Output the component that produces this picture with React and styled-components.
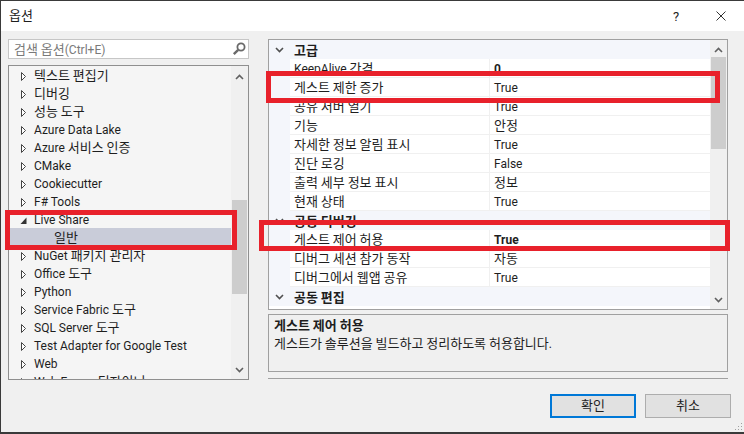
import React from 'react';
import styled, {createGlobalStyle} from 'styled-components';

const GlobalStyle = createGlobalStyle`
    html, body {
        margin: 0;
        padding: 0;
        background: #f0f0f0;
    }
`;

const FONT = `Roboto, "Noto Sans", "Noto Sans CJK KR", sans-serif`;

const Dialog = styled.div`
    position: relative;
    width: 744px;
    height: 434px;
    box-sizing: border-box;
    display: flex;
    flex-direction: column;
    overflow: hidden;
    background: #f0f0f0;
    border-top: 1px solid #3a3a3a;
    border-left: 1px solid #3a3a3a;
    border-bottom: 2px solid #3a3a3a;
    font-family: ${FONT};
    font-size: 12px;
    color: #1e1e1e;
`;

// Hangul runs sit a size above the latin text, as they do in the dialog font.
// The small line-height keeps them on the latin baseline
const Hangul = styled.span`
    font-family: "Noto Sans CJK KR", sans-serif;
    font-size: 13px;
    line-height: 11px;
`;

const TitleBar = styled.div`
    height: 30px;
    flex: none;
    display: flex;
    align-items: center;
    background: #fff;
    padding-left: 8px;
`;

const TitleText = styled.span`
    flex: 1;
`;

const HelpMark = styled.span`
    width: 14px;
    margin-right: 33px;
    text-align: center;
    font-size: 13px;
`;

const CloseButton = styled.svg`
    width: 10px;
    height: 10px;
    margin-right: 18px;
`;

const Panes = styled.div`
    display: flex;
    padding: 8px 15px 0 7px;
    flex: none;
`;

const LeftPane = styled.div`
    width: 241px;
    flex: none;
    margin-right: 19px;
`;

const SearchBox = styled.div`
    height: 20px;
    box-sizing: border-box;
    display: flex;
    align-items: center;
    justify-content: space-between;
    padding: 2px 2px 0 5px;
    background: #fff;
    border: 1px solid #c6c6c6;
    color: #7a7a7a;
    margin-bottom: 6px;
`;

const SearchIcon = styled.svg`
    width: 14px;
    height: 14px;
    margin-bottom: 2px;
`;

const Tree = styled.div`
    height: 315px;
    box-sizing: border-box;
    display: flex;
    border: 1px solid #8f8f8f;
    background: #f5f5f5;
    overflow: hidden;
`;

const TreeRows = styled.div`
    flex: 1;
    overflow: hidden;
`;

const TreeRow = styled.div`
    height: 18px;
    box-sizing: border-box;
    display: flex;
    align-items: center;
    white-space: nowrap;
    padding-top: 2px;
    padding-left: ${p => (p.$child ? 45 : 11)}px;
    background: ${p => (p.$selected ? '#c9ccd9' : 'transparent')};
`;

const Label = styled.span`
    white-space: pre;
`;

const Expander = styled.svg`
    width: 7px;
    height: 11px;
    margin-right: 7px;
    flex: none;
`;

const Scrollbar = styled.div`
    position: relative;
    width: 17px;
    flex: none;
    background: #f0f0f0;
`;

const Thumb = styled.div`
    position: absolute;
    left: 1px;
    right: 1px;
    top: ${p => p.$top}px;
    height: ${p => p.$height}px;
    background: #cdcdcd;
`;

const Arrow = styled.svg`
    position: absolute;
    left: 4px;
    width: 9px;
    height: 6px;
    top: ${p => p.$top}px;
`;

const RightPane = styled.div`
    width: 460px;
    flex: none;
`;

const Grid = styled.div`
    height: 271px;
    box-sizing: border-box;
    display: flex;
    border: 1px solid #a0a0a0;
    background: #fff;
    overflow: hidden;
    margin-bottom: 4px;
`;

const GridRows = styled.div`
    flex: 1;
    overflow: hidden;
`;

const Category = styled.div`
    height: 19px;
    box-sizing: border-box;
    padding-top: 2px;
    display: flex;
    align-items: center;
    background: #f4f6fb;
    font-weight: 700;
`;

const CategoryChevron = styled.svg`
    width: 9px;
    height: 6px;
    margin: 0 10px 2px 6px;
    flex: none;
`;

const PropRow = styled.div`
    height: 19px;
    box-sizing: border-box;
    display: flex;
    align-items: center;
    margin-left: 21px;
    border-bottom: 1px solid #f0f0f0;
    box-shadow: -21px 0 0 #f4f6fb;
`;

const PropName = styled.div`
    width: 200px;
    height: 100%;
    box-sizing: border-box;
    padding: 2px 0 0 4px;
    display: flex;
    align-items: center;
    border-right: 1px solid #f0f0f0;
    flex: none;
`;

const PropValue = styled.div`
    padding: 2px 0 0 4px;
    font-weight: ${p => (p.$bold ? 700 : 400)};
`;

const Description = styled.div`
    height: 58px;
    box-sizing: border-box;
    border: 1px solid #a0a0a0;
    padding: 2px 5px;
    line-height: 18px;
`;

const DescriptionTitle = styled.div`
    font-weight: 700;
`;

const Separator = styled.div`
    height: 1px;
    background: #a0a0a0;
    margin-top: 6px;
`;

const Footer = styled.div`
    display: flex;
    justify-content: flex-end;
    gap: 9px;
    padding: 14px 13px 0 0;
`;

const Button = styled.button`
    width: 86px;
    height: 24px;
    box-sizing: border-box;
    padding: 0;
    font: inherit;
    color: #1e1e1e;
    background: #e1e1e1;
    border: ${p => (p.$primary ? '2px solid #0078d7' : '1px solid #adadad')};
`;

const Grip = styled.svg`
    position: absolute;
    right: 1px;
    bottom: 1px;
    width: 10px;
    height: 10px;
`;

const RedBox = styled.div`
    position: absolute;
    box-sizing: border-box;
    border: 5px solid #e8212b;
    left: ${p => p.$left}px;
    top: ${p => p.$top}px;
    width: ${p => p.$width}px;
    height: ${p => p.$height}px;
`;

const treeItems = [
    {label: '텍스트 편집기'},
    {label: '디버깅'},
    {label: '성능 도구'},
    {label: 'Azure Data Lake'},
    {label: 'Azure 서비스 인증'},
    {label: 'CMake'},
    {label: 'Cookiecutter'},
    {label: 'F# Tools'},
    {label: 'Live Share', open: true},
    {label: '일반', child: true, selected: true},
    {label: 'NuGet 패키지 관리자'},
    {label: 'Office 도구'},
    {label: 'Python'},
    {label: 'Service Fabric 도구'},
    {label: 'SQL Server 도구'},
    {label: 'Test Adapter for Google Test'},
    {label: 'Web'},
    {label: 'Web Forms 디자이너'}
];

const gridItems = [
    {category: '고급'},
    {name: 'KeepAlive 간격', value: '0', bold: true},
    {name: '게스트 제한 증가', value: 'True'},
    {name: '공유 서버 열기', value: 'True'},
    {name: '기능', value: '안정'},
    {name: '자세한 정보 알림 표시', value: 'True'},
    {name: '진단 로깅', value: 'False'},
    {name: '출력 세부 정보 표시', value: '정보'},
    {name: '현재 상태', value: 'True'},
    {category: '공동 디버깅'},
    {name: '게스트 제어 허용', value: 'True', bold: true},
    {name: '디버그 세션 참가 동작', value: '자동'},
    {name: '디버그에서 웹앱 공유', value: 'True'},
    {category: '공동 편집'}
];

const Mixed = ({text}) => (
    <Label>
        {text.split(/([가-힣]+(?: [가-힣]+)*)/).map((part, i) => (
            i % 2 ? <Hangul key={i}>{part}</Hangul> : part
        ))}
    </Label>
);

const ChevronUp = ({top}) => (
    <Arrow $top={top} viewBox="0 0 9 6">
        <path d="M1 5 L4.5 1.5 L8 5" fill="none" stroke="#606060" strokeWidth="1.6"/>
    </Arrow>
);

const ChevronDown = ({top}) => (
    <Arrow $top={top} viewBox="0 0 9 6">
        <path d="M1 1 L4.5 4.5 L8 1" fill="none" stroke="#606060" strokeWidth="1.6"/>
    </Arrow>
);

const TreeExpander = ({open}) => (
    <Expander viewBox="0 0 7 11">
        {open
            ? <path d="M6.5 2.5 V9 H0.5 Z" fill="#333"/>
            : <path d="M1.5 1.5 L5.5 5.5 L1.5 9.5 Z" fill="#fff" stroke="#444" strokeWidth="1"/>}
    </Expander>
);

export default function App() {
    return (
        <Dialog>
            <GlobalStyle/>
            <TitleBar>
                <TitleText><Mixed text="옵션"/></TitleText>
                <HelpMark>?</HelpMark>
                <CloseButton viewBox="0 0 10 10">
                    <path d="M0.5 0.5 L9.5 9.5 M9.5 0.5 L0.5 9.5" stroke="#333" strokeWidth="1"/>
                </CloseButton>
            </TitleBar>
            <Panes>
                <LeftPane>
                    <SearchBox>
                        <Mixed text="검색 옵션(Ctrl+E)"/>
                        <SearchIcon viewBox="0 0 14 14">
                            <circle cx="9" cy="5" r="3.6" fill="none" stroke="#6a6a6a" strokeWidth="1.8"/>
                            <path d="M6.2 7.8 L1.8 12.2" stroke="#6a6a6a" strokeWidth="2.4"/>
                        </SearchIcon>
                    </SearchBox>
                    <Tree>
                        <TreeRows>
                            {treeItems.map(item => (
                                <TreeRow key={item.label} $child={item.child} $selected={item.selected}>
                                    {!item.child && <TreeExpander open={item.open}/>}
                                    <Mixed text={item.label}/>
                                </TreeRow>
                            ))}
                        </TreeRows>
                        <Scrollbar>
                            <ChevronUp top={8}/>
                            <Thumb $top={134} $height={94}/>
                            <ChevronDown top={301}/>
                        </Scrollbar>
                    </Tree>
                </LeftPane>
                <RightPane>
                    <Grid>
                        <GridRows>
                            {gridItems.map(item => item.category
                                ? (
                                    <Category key={item.category}>
                                        <CategoryChevron viewBox="0 0 9 6">
                                            <path d="M1 1 L4.5 4.5 L8 1" fill="none" stroke="#505050" strokeWidth="1.6"/>
                                        </CategoryChevron>
                                        <Mixed text={item.category}/>
                                    </Category>
                                )
                                : (
                                    <PropRow key={item.name}>
                                        <PropName><Mixed text={item.name}/></PropName>
                                        <PropValue $bold={item.bold}><Mixed text={item.value}/></PropValue>
                                    </PropRow>
                                ))}
                        </GridRows>
                        <Scrollbar>
                            <ChevronUp top={7}/>
                            <Thumb $top={17} $height={92}/>
                            <ChevronDown top={257}/>
                        </Scrollbar>
                    </Grid>
                    <Description>
                        <DescriptionTitle><Mixed text="게스트 제어 허용"/></DescriptionTitle>
                        <div><Mixed text="게스트가 솔루션을 빌드하고 정리하도록 허용합니다."/></div>
                    </Description>
                    <Separator/>
                </RightPane>
            </Panes>
            <Footer>
                <Button $primary><Mixed text="확인"/></Button>
                <Button><Mixed text="취소"/></Button>
            </Footer>
            <Grip viewBox="0 0 10 10">
                <path d="M8 2h1v1H8z M5 5h1v1H5z M8 5h1v1H8z M2 8h1v1H2z M5 8h1v1H5z M8 8h1v1H8z" fill="#a0a0a0"/>
            </Grip>
            <RedBox $left={4} $top={209} $width={232} $height={40}/>
            <RedBox $left={265} $top={70} $width={454} $height={32}/>
            <RedBox $left={258} $top={219} $width={471} $height={31}/>
        </Dialog>
    );
}
